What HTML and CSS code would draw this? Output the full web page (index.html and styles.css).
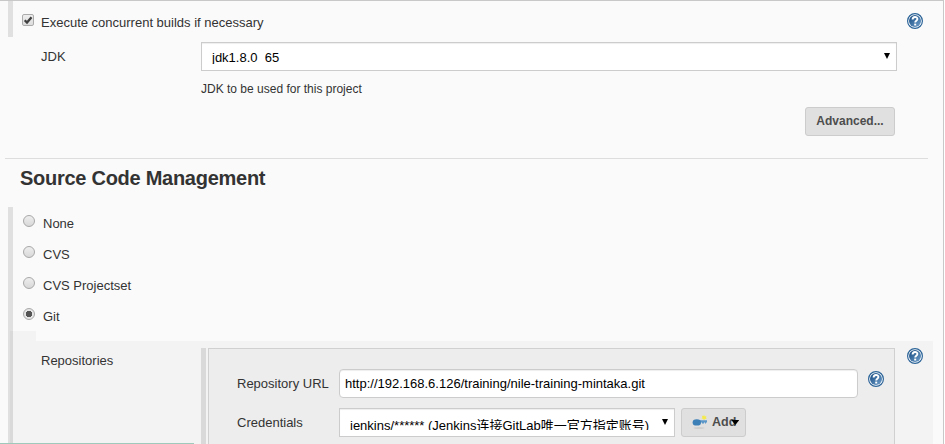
FILE: index.html
```
<!DOCTYPE html>
<html lang="en">
<head>
<meta charset="utf-8">
<title>Project configuration</title>
<link rel="stylesheet" href="styles.css">
</head>
<body>
<svg width="0" height="0" class="defs">
  <defs>
    <linearGradient id="blue" x1="0" y1="0" x2="1" y2="1"><stop offset="0" stop-color="#15497f"/><stop offset="1" stop-color="#6f9fcb"/></linearGradient>
    <symbol id="help" viewBox="0 0 16 16">
      <circle cx="8" cy="8" r="7.4" fill="#fff" stroke="#2c6498" stroke-width="1.2"/>
      <circle cx="8" cy="8" r="6" fill="url(#blue)"/>
      <path d="M5.6 6.4C5.6 3.2 10.4 3.2 10.4 6c0 1.7-2.2 1.8-2.2 3.5" fill="none" stroke="#fff" stroke-width="1.9"/>
      <rect x="7.2" y="10.6" width="2" height="1.9" fill="#fff"/>
    </symbol>
  </defs>
</svg>
<main class="panel">
  <section class="row exec">
    <span class="check"><svg viewBox="0 0 12 12"><path d="M2.7 6.2 5 8.6 9.5 3.2" fill="none" stroke="#404040" stroke-width="2.3"/></svg></span>
    <label class="t exec-label">Execute concurrent builds if necessary</label>
    <svg class="help"><use href="#help"/></svg>
  </section>
  <section class="jdk">
    <label class="t">JDK</label>
    <div class="select"><span class="value">jdk1.8.0_65</span><i class="arrow"></i></div>
  </section>
  <p class="desc">JDK to be used for this project</p>
  <div class="actions"><button class="btn advanced">Advanced...</button></div>
  <hr class="rule">
  <h2 class="title"><span>Source Code Management</span></h2>
  <section class="scm">
    <div class="option"><span class="radio"></span><label class="t">None</label></div>
    <div class="option"><span class="radio"></span><label class="t">CVS</label></div>
    <div class="option"><span class="radio"></span><label class="t">CVS Projectset</label></div>
    <div class="option"><span class="radio on"></span><label class="t">Git</label></div>
    <div class="tab"></div>
    <div class="git">
      <label class="t repos">Repositories</label>
      <div class="bar"></div>
      <div class="box">
        <div class="field">
          <label class="t">Repository URL</label>
          <div class="input"><span class="url">http://192.168.6.126/training/nile-training-mintaka.git</span></div>
          <svg class="help"><use href="#help"/></svg>
        </div>
        <div class="field">
          <label class="t">Credentials</label>
          <div class="select cred"><span class="value">jenkins/****** (Jenkins连接GitLab唯一官方指定账号)</span><i class="arrow"></i></div>
          <button class="btn add">
            <svg viewBox="0 0 16 16" width="16" height="16">
              <ellipse cx="7" cy="14" rx="5.5" ry=".7" fill="#c8c8c8"/>
              <path d="m12 .8.8 1.6 1.7-.4-.6 1.6.9 1.1-1.8.2-1 1.3-.9-1.4-1.7-.2 1-1.3-.5-1.6 1.6.4z" fill="#f5ea4d"/>
              <path d="M7 6.3h8v2.2h-1v1h-1v-1h-1v1h-2v-1H7z" fill="#5b97c8"/>
              <ellipse cx="4.8" cy="8.4" rx="4.2" ry="3.2" fill="#3d80b7"/>
            </svg>
            <span>Add</span><i class="arrow add-arrow"></i>
          </button>
        </div>
      </div>
      <svg class="help git-help"><use href="#help"/></svg>
    </div>
  </section>
</main>
<div class="status"></div>
</body>
</html>
```
FILE: styles.css
```
* { box-sizing: border-box; }
body { margin: 0; width: 945px; height: 444px; overflow: hidden; background: #fff; color: #333; font: 13px/16px "Liberation Sans", "Noto Sans CJK SC", sans-serif; }
.defs { position: absolute; }
svg { display: block; }
.panel { width: 944px; height: 444px; overflow: hidden; background: #fafafa; border-top: 1px solid #c8c8c8; border-right: 1px solid #c8c8c8; }
.t { white-space: nowrap; }
.help { width: 16px; height: 16px; flex: none; }
.exec { display: flex; height: 36px; margin-left: 8px; border-left: 5px solid #e0e0e0; padding: 13px 20px 0 9px; }
.check { width: 12px; height: 12px; border: 1px solid #ababab; border-radius: 2px; background: linear-gradient(#eee, #ddd); margin-right: 7px; }
.check svg { width: 12px; height: 12px; margin: -1px; }
.exec-label { flex: 1; padding-top: 1px; }
.exec .help { margin-top: -1px; }
.jdk { display: flex; padding: 5px 0 0 41px; }
.jdk label { width: 160px; padding-top: 7px; }
.select { display: flex; width: 696px; height: 29px; border: 1px solid #ccc; background: #fff; color: #000; padding: 6px 6px 0 10px; box-shadow: inset 0 1px 1px #eee; }
.value { height: 15px; line-height: 17px; overflow: hidden; flex: 1; white-space: nowrap; }
.arrow { width: 6px; height: 6px; background: #000; clip-path: polygon(0 0, 100% 0, 50% 100%); margin-top: 4px; }
.desc { margin: 10px 0 0 201px; font-size: 12px; }
.actions { display: flex; justify-content: flex-end; padding: 10px 48px 0 0; }
.btn { font: bold 13px/16px "Liberation Sans", sans-serif; color: #4d4d4d; background: #e0e0e0; border: 1px solid #ccc; border-radius: 3px; height: 29px; padding: 0 0 2px; }
.advanced { width: 90px; font-size: 12px; }
.rule { height: 1px; border: 0; background: #ddd; margin: 22px 15px 0 5px; }
.title { margin: 0 0 0 20px; height: 48px; padding-top: 7px; font-size: 20px; line-height: 24px; letter-spacing: -.27px; }
.scm { margin-left: 8px; height: 240px; border-left: 5px solid #e0e0e0; }
.option { display: flex; height: 31px; padding: 8px 0 0 10px; }
.option label { padding-top: 1px; }
.radio { width: 12px; height: 12px; border: 1px solid #a8a8a8; border-radius: 50%; background: linear-gradient(#eee, #d8d8d8); margin-right: 8px; }
.on { background: radial-gradient(circle, #555 0 3px, #e6e6e6 3.5px); }
.tab { height: 10px; width: 26px; margin-left: -3px; background: rgba(0,0,0,.028); }
.git { display: flex; height: 110px; width: 923px; margin-left: -3px; padding: 7px 0 0 31px; background: rgba(0,0,0,.028); }
.repos { width: 160px; padding-top: 5px; }
.bar { width: 5px; background: #d9d9d9; margin-right: 2px; }
.box { width: 687px; border: 1px solid #d0d0d0; border-bottom: 0; background: #ededed; padding: 20px 0 0 28px; }
.field { display: flex; height: 39px; }
.field label { width: 102px; padding-top: 7px; }
.input { width: 519px; height: 29px; border: 1px solid #ccc; border-radius: 4px; background: #fff; color: #000; padding: 6px 5px; margin-right: 10px; box-shadow: inset 0 1px 1px #eee; }
.url { white-space: nowrap; }
.field .help { margin-top: 2px; }
.cred { width: 336px; margin-right: 6px; }
.cred .value { line-height: 21px; }
.add { display: flex; width: 65px; padding: 5px 0 0 10px; }
.add span { margin-left: 4px; font-size: 12.5px; }
.add-arrow { margin: 6px 0 0 -5px; width: 8px; height: 5px; flex: none; }
.git-help { margin-left: 12px; }
.status { position: absolute; left: 0; top: 443px; width: 194px; height: 1px; background: #9fc9bb; }
```
